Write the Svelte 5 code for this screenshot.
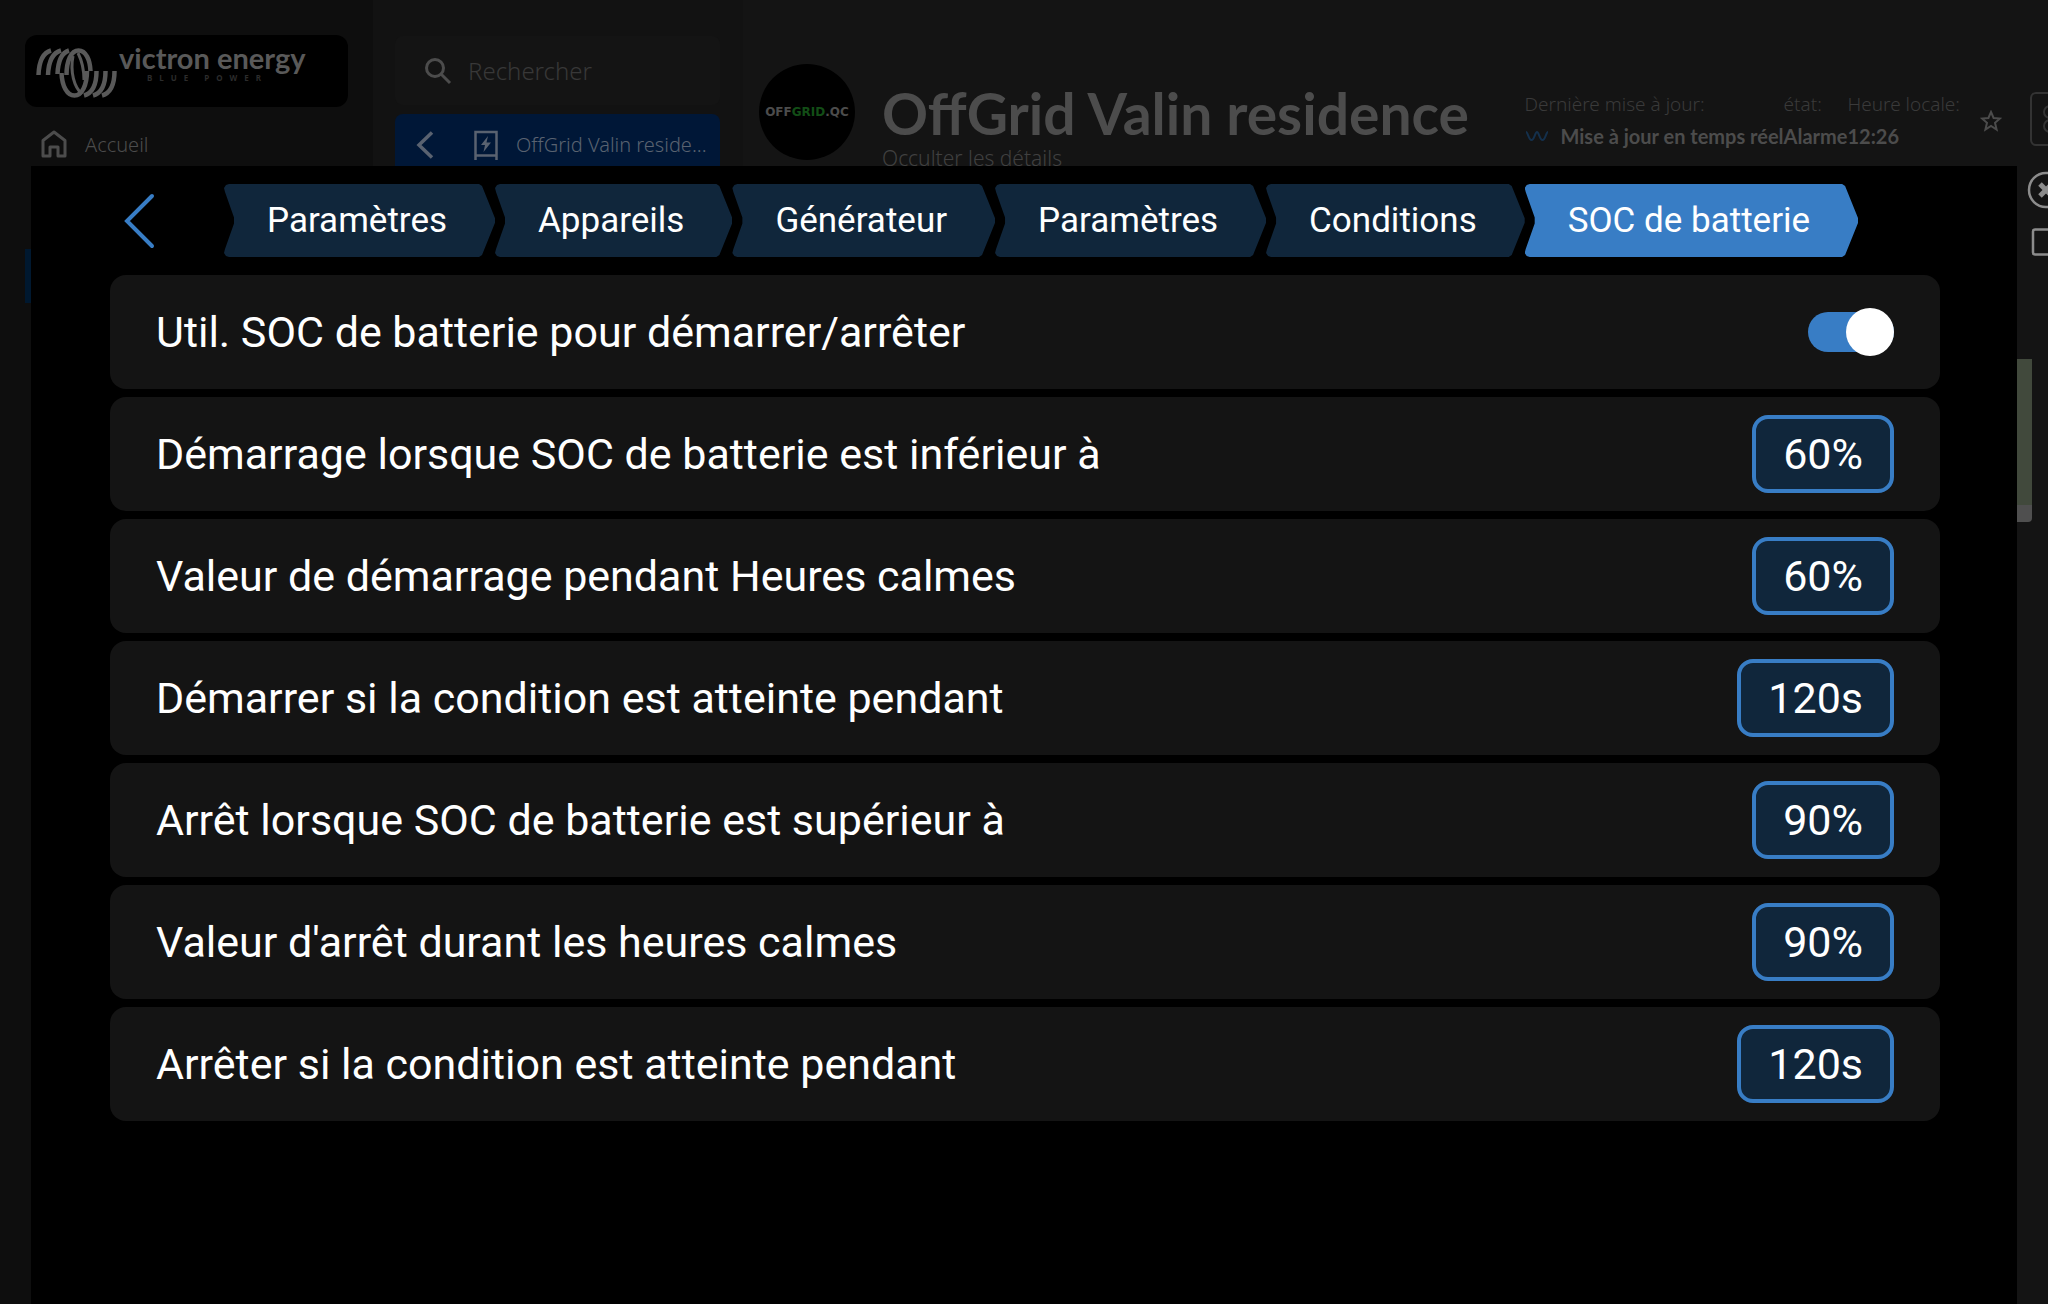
<script>
  const crumbs = ['Paramètres', 'Appareils', 'Générateur', 'Paramètres', 'Conditions', 'SOC de batterie'];

  let enabled = $state(true);

  const settings = [
    { label: 'Démarrage lorsque SOC de batterie est inférieur à', value: '60%' },
    { label: 'Valeur de démarrage pendant Heures calmes', value: '60%' },
    { label: 'Démarrer si la condition est atteinte pendant', value: '120s' },
    { label: 'Arrêt lorsque SOC de batterie est supérieur à', value: '90%' },
    { label: "Valeur d'arrêt durant les heures calmes", value: '90%' },
    { label: 'Arrêter si la condition est atteinte pendant', value: '120s' }
  ];
</script>

<div class="page">
  <aside class="sidebar">
    <a class="logo" href="#home" aria-label="Victron Energy">
      <svg class="mark" viewBox="0 0 81 50" fill="none" stroke="currentColor" stroke-width="4.500">
        <path d="M2.500 27C3 14 6 5 15 2.500M12 27C12.500 14 16 5 25 2.500M21.500 26C22 14 25 5 33 2.500" />
        <path d="M30.500 27C30.500 13 35 2.500 42.500 2.500S54 12 54.500 23" />
        <path d="M25.500 25C26 38 31 47.500 38.500 47.500S51 37 51 23" />
        <path d="M37 8C34 24 38 39 46 46M42 5c4 8 6 17 6 27" stroke-width="3" />
        <path d="M60.500 23C60.500 35 57 45 48 47.500M69.500 23C69.500 35 66 45 57 47.500M78.500 23C78.500 35 75 45 66 47.500" />
      </svg>
      <span class="brand">
        <span class="name">victron energy</span>
        <span class="tagline">BLUE POWER</span>
      </span>
    </a>
    <nav class="menu">
      <a href="#home">
        <svg width="26" height="28" viewBox="0 0 26 28" fill="none" stroke="currentColor" stroke-width="3" stroke-linejoin="round">
          <path d="M2 10.500 13 2l11 8.500V26h-7v-9H9v9H2z" />
        </svg>
        Accueil
      </a>
      <a class="current" href="#installation" aria-label="Installation"></a>
    </nav>
  </aside>

  <div class="sites">
    <label class="search">
      <svg width="28" height="28" viewBox="0 0 28 28" fill="none" stroke="currentColor" stroke-width="3">
        <circle cx="11" cy="11" r="8.500" />
        <path d="m17 17 9 9" />
      </svg>
      <input type="search" placeholder="Rechercher" aria-label="Rechercher" />
    </label>
    <a class="site" href="#site">
      <svg width="18" height="28" viewBox="0 0 18 28" fill="none" stroke="currentColor" stroke-width="3.500">
        <path d="M16 1.500 3 14l13 12.500" />
      </svg>
      <svg class="install" width="26" height="30" viewBox="0 0 26 30" fill="none" stroke="currentColor" stroke-width="2.500">
        <path d="M2.500 30V2h21v28M2.500 25.500h21" />
        <path d="M15 6 8 15h4l-1.500 7L18 12.500h-4.500z" fill="currentColor" stroke="none" />
      </svg>
      <span>OffGrid Valin reside...</span>
    </a>
  </div>

  <main class="main">
    <header class="header">
      <div class="avatar"><span>OFF<b>GRID</b>.QC</span></div>
      <div class="heading">
        <h1>OffGrid Valin residence</h1>
        <a href="#details">Occulter les détails</a>
      </div>
      <dl class="status">
        <div>
          <dt>Dernière mise à jour:</dt>
          <dd>
            <svg width="24" height="12" viewBox="0 0 24 12" fill="none" stroke="currentColor" stroke-width="2">
              <path d="M1 2c2 0 2.500 8 5.500 8S10 2 12 2s2.500 8 5.500 8S21 2 23 2" />
            </svg>
            Mise à jour en temps réel
          </dd>
        </div>
        <div>
          <dt>état:</dt>
          <dd>Alarme</dd>
        </div>
        <div>
          <dt>Heure locale:</dt>
          <dd>12:26</dd>
        </div>
      </dl>
      <button class="star" aria-label="Favori">
        <svg width="22" height="22" viewBox="0 0 22 22" fill="none" stroke="currentColor" stroke-width="2">
          <path d="m11 2 2.600 6 6.400.500-5 4.300 1.600 6.700L11 16l-5.600 3.500L7 12.800 2 8.500 8.400 8z" />
        </svg>
      </button>
      <button class="action" aria-label="Contrôle">
        <svg width="30" height="30" viewBox="0 0 30 30" fill="none" stroke="currentColor" stroke-width="2">
          <circle cx="8" cy="8" r="6" />
          <circle cx="8" cy="22" r="6" />
        </svg>
      </button>
    </header>
    <div class="widget"></div>
  </main>

  <div class="window-tools">
    <button aria-label="Fermer">
      <svg width="38" height="38" viewBox="0 0 38 38" fill="none" stroke="currentColor" stroke-width="2.500">
        <circle cx="19" cy="19" r="17" />
        <path d="m13 13 12 12M25 13 13 25" stroke-width="5" />
      </svg>
    </button>
    <button aria-label="Plein écran">
      <svg width="38" height="28" viewBox="0 0 38 28" fill="none" stroke="currentColor" stroke-width="2.500">
        <rect x="6" y="1.500" width="30" height="25" rx="2" />
      </svg>
    </button>
  </div>

  <section class="console">
    <div class="topbar">
      <button class="back" aria-label="Retour">
        <svg width="32" height="56" viewBox="0 0 32 56" fill="none" stroke="currentColor" stroke-width="4" stroke-linecap="round">
          <path d="M29 3 4 28l25 25" />
        </svg>
      </button>
      <nav class="crumbs">
        {#each crumbs as crumb, i}
          <a href="#crumb-{i}" class:active={i === crumbs.length - 1}>{crumb}</a>
        {/each}
      </nav>
    </div>

    <div class="rows">
      <div class="row">
        <label for="use-soc">Util. SOC de batterie pour démarrer/arrêter</label>
        <input id="use-soc" class="toggle" type="checkbox" bind:checked={enabled} />
      </div>
      {#each settings as setting, i}
        <div class="row">
          <span id="setting-{i}">{setting.label}</span>
          <button class="value" aria-describedby="setting-{i}">{setting.value}</button>
        </div>
      {/each}
    </div>
  </section>
</div>

<style>
  :global(body) {
    margin: 0;
    background: #141414;
  }
  .page {
    position: relative;
    display: flex;
    min-height: 100vh;
    overflow: hidden;
    background: #141414;
    color: #4c4c4c;
    font-family: "Noto Sans", "Open Sans", sans-serif;
    font-weight: 300;
  }
  a {
    color: inherit;
    text-decoration: none;
  }
  button {
    padding: 0;
    border: 0;
    background: none;
    color: inherit;
    font: inherit;
    cursor: pointer;
  }
  svg {
    display: block;
    flex: none;
  }

  .sidebar {
    box-sizing: border-box;
    flex: none;
    width: 373px;
    padding: 35px 25px 0;
    background: #0e0e0e;
  }
  .logo {
    display: flex;
    align-items: center;
    gap: 2px;
    height: 60px;
    padding: 8px 0 4px 11px;
    border-radius: 12px;
    background: #000;
    color: #595959;
  }
  .mark {
    width: 81px;
    height: 50px;
  }
  .brand {
    display: flex;
    flex-direction: column;
    align-self: flex-start;
  }
  .name {
    font-family: Lato, sans-serif;
    font-size: 29px;
    font-weight: 700;
    line-height: 30px;
  }
  .tagline {
    padding-left: 28px;
    color: #2c2c2c;
    font-size: 8px;
    font-weight: 700;
    line-height: 10px;
    letter-spacing: 7px;
  }
  .menu {
    display: flex;
    flex-direction: column;
    gap: 78px;
    padding-top: 10px;
  }
  .menu a {
    display: flex;
    align-items: center;
    gap: 18px;
    height: 54px;
    padding-left: 16px;
    font-size: 20px;
  }
  .menu .current {
    background: #00182f;
  }

  .sites {
    box-sizing: border-box;
    flex: none;
    width: 370px;
    padding: 36px 23px 0 22px;
    background: #121212;
  }
  .search {
    display: flex;
    align-items: center;
    gap: 16px;
    height: 69px;
    padding-left: 29px;
    border-radius: 8px;
    background: #141414;
  }
  .search input {
    flex: 1;
    min-width: 0;
    padding: 0;
    border: 0;
    outline: 0;
    background: none;
    color: #4c4c4c;
    font: inherit;
    font-size: 24px;
  }
  .search input::placeholder {
    color: #383838;
  }
  .site {
    display: flex;
    align-items: center;
    height: 61px;
    margin-top: 9px;
    padding-left: 21px;
    border-radius: 8px 8px 0 0;
    background: #001737;
    color: #596270;
    font-size: 20px;
  }
  .install {
    margin: 0 17px 0 39px;
  }

  .main {
    flex: 1;
    min-width: 0;
  }
  .header {
    display: flex;
    align-items: flex-start;
    height: 110px;
    padding: 64px 0 0 16px;
  }
  .avatar {
    display: flex;
    flex: none;
    align-items: center;
    justify-content: center;
    width: 96px;
    height: 96px;
    border-radius: 50%;
    background: #000;
    color: #4c4c4c;
    font-family: "DejaVu Sans", sans-serif;
    font-size: 12px;
    font-weight: 700;
  }
  .avatar b {
    color: #124d16;
  }
  .heading {
    flex: 1;
    padding: 20px 0 0 27px;
    white-space: nowrap;
  }
  h1 {
    margin: 0;
    color: #4c4c4c;
    font-family: Lato, sans-serif;
    font-size: 57px;
    font-weight: 700;
    line-height: 58px;
  }
  .heading a {
    display: block;
    color: #404040;
    font-size: 21px;
    line-height: 32px;
  }
  .status {
    display: flex;
    margin: 24px 0 0;
    font-size: 19px;
    line-height: 32px;
    white-space: nowrap;
  }
  dt {
    color: #3a3a3a;
  }
  dd {
    display: flex;
    align-items: center;
    gap: 12px;
    margin: 0;
    font-family: Lato, sans-serif;
    font-size: 20px;
    font-weight: 700;
  }
  dd svg {
    color: #14304c;
  }
  .star {
    margin: 46px 28px 0 20px;
  }
  .action {
    flex: none;
    width: 54px;
    height: 54px;
    margin: 28px -36px 0 0;
    padding-left: 10px;
    border: 2px solid #333;
    border-radius: 6px;
    color: #333;
  }
  .widget {
    height: 146px;
    margin: 185px 16px 0 0;
    border-bottom: 17px solid #4f4f4f;
    border-radius: 0 0 4px 0;
    background: #41493c;
  }

  /* sits on the right edge, partly outside the window */
  .window-tools {
    position: absolute;
    top: 171px;
    right: -17px;
    display: flex;
    flex-direction: column;
    gap: 19px;
    color: #8c8c8c;
  }

  .console {
    position: absolute;
    inset: 166px 31px 0;
    background: #000;
    color: #fff;
    font-family: Roboto, sans-serif;
    font-weight: 400;
  }
  .topbar {
    display: flex;
    align-items: center;
    gap: 69px;
    padding: 18px 92px;
  }
  .back {
    color: #387dc5;
  }
  .crumbs {
    display: flex;
  }
  .crumbs a {
    padding: 0 48px 0 43px;
    background: #10263b;
    color: #fff;
    font-size: 35px;
    line-height: 73px;
    white-space: nowrap;
    clip-path: polygon(
      0 4px, 2px 1px, 5px 0,
      calc(100% - 16px) 0, calc(100% - 13px) 2px,
      100% 47%, 100% 53%,
      calc(100% - 13px) calc(100% - 2px), calc(100% - 16px) 100%,
      5px 100%, 2px calc(100% - 1px), 0 calc(100% - 4px),
      1px calc(100% - 8px), 10px 54%, 10px 46%, 1px 8px
    );
  }
  .crumbs .active {
    background: #387dc5;
  }
  .rows {
    display: flex;
    flex-direction: column;
    gap: 8px;
    padding: 0 77px 0 79px;
  }
  .row {
    display: flex;
    align-items: center;
    justify-content: space-between;
    height: 114px;
    padding: 0 46px;
    border-radius: 16px;
    background: #141414;
    font-size: 43px;
  }
  .value {
    height: 78px;
    padding: 0 27px;
    border: 4px solid #387dc5;
    border-radius: 16px;
    background: #10263b;
  }
  .toggle {
    display: flex;
    align-items: center;
    width: 86px;
    height: 40px;
    margin: 0;
    appearance: none;
    background: #387dc5;
    border-radius: 20px;
    cursor: pointer;
  }
  .toggle::before {
    content: "";
    flex: none;
    width: 48px;
    height: 48px;
    border-radius: 50%;
    background: #fff;
  }
  .toggle:checked::before {
    margin-left: auto;
  }
</style>
